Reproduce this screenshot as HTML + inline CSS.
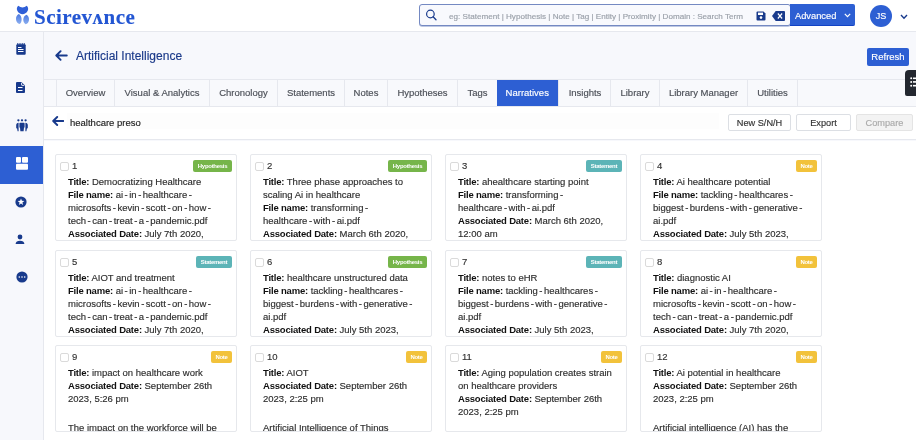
<!DOCTYPE html>
<html><head><meta charset="utf-8">
<style>
*{box-sizing:border-box;margin:0;padding:0}
html,body{width:916px;height:440px;overflow:hidden;background:#f7f8fc;font-family:"Liberation Sans",sans-serif;position:relative}
body{will-change:transform;-webkit-text-stroke:0.15px currentColor}
b,.badge{-webkit-text-stroke:0}
.abs{position:absolute}
#top{left:0;top:0;width:916px;height:32px;background:#fff;border-bottom:1px solid #e6e8ee}
#side{left:0;top:32px;width:44px;height:408px;background:#f7f8fc;border-right:1px solid #e6e8ee}
.navy{fill:#183a8c}
#search{left:419px;top:4px;width:372px;height:22px;border:1px solid #7489c2;box-shadow:0 0.7px 0 #a9b6da;border-radius:3px;background:#f8f9fd}
#search .ph{position:absolute;left:29px;top:6.5px;font-size:8.1px;color:#9aa0a9;white-space:nowrap}
#adv{left:790px;top:4px;width:65px;height:22px;background:#2d5fd3;border-bottom:1px solid #1343c4;border-radius:0 2px 2px 0;color:#fff;font-size:9.3px}
#avatar{left:870px;top:4.5px;width:22px;height:22px;border-radius:50%;background:#2d5fd3;color:#fff;font-size:9px;text-align:center;line-height:22px}
#title{left:76px;top:49px;font-size:12px;color:#1b3a8a;white-space:nowrap}
#refresh{left:867px;top:48px;width:42px;height:18px;background:#2d5fd3;border-radius:2px;color:#fff;font-size:9.5px;text-align:center;line-height:18px}
#tabs{left:44px;top:79px;width:872px;height:28px;border-top:1px solid #e6e8ee;border-bottom:1px solid #e6e8ee;background:#f8f9fc}
.tab{position:absolute;top:0;height:26px;border-left:1px solid #e6e8ee;font-size:9.5px;color:#4b4f57;text-align:center;line-height:26px;white-space:nowrap}
.tab.act{background:#2d5fd3;color:#fff;border-left:none}
#panel{left:44px;top:107px;width:872px;height:33px;background:#fff;border-bottom:1px solid #e6e8ee}
#content{left:44px;top:141px;width:872px;height:299px;background:#fff}
.btn{position:absolute;top:114px;height:17px;border:1px solid #dcdfe4;border-radius:2px;background:#fff;font-size:9.2px;color:#333;text-align:center;line-height:16px;white-space:nowrap}
.card{position:absolute;width:182px;height:87px;background:#fff;border:1px solid #e6e8ec;border-radius:2px;overflow:hidden}
.card .cb{position:absolute;left:4px;top:7px;width:9px;height:9px;border:1px solid #dadada;border-radius:2px;background:#fff}
.card .num{position:absolute;left:16px;top:5px;font-size:9.5px;color:#333}
.card .badge{position:absolute;right:4px;top:4.5px;height:12.5px;border-radius:2px;color:#fff;font-size:6px;font-weight:bold;letter-spacing:-0.3px;line-height:12.5px;text-align:center}
.hyp{background:#76b54a;width:39px}
.stm{background:#5cb4b7;width:36px}
.note{background:#f2c23b;width:21px}
.card .body{position:absolute;left:12px;top:20px;width:165px;font-size:9.5px;line-height:13px;color:#2e2e2e}
.card .body b{color:#111;letter-spacing:-0.2px}
.hy{font-style:normal;margin:0 1.5px}
</style></head><body>
<div id="top" class="abs"></div>
<div id="side" class="abs"></div>

<!-- logo -->
<svg class="abs" style="left:15px;top:5px" width="16" height="20" viewBox="0 0 16 20">
  <defs><linearGradient id="lg" x1="0" y1="0" x2="0" y2="1"><stop offset="0" stop-color="#4a78e0"/><stop offset="1" stop-color="#8db0f0"/></linearGradient></defs>
  <path d="M3.2 0.8 Q7.5 4.4 11.8 0.8 C13 2 13.4 3.6 13 5 C12.4 7 11 8.3 9 9 L7.5 9.3 L6 9 C4 8.3 2.6 7 2 5 C1.6 3.6 2 2 3.2 0.8Z" fill="#2f5fd7"/>
  <path d="M3.7 9 C1.7 10 0.9 12 1 14.2 C1.1 16.8 2.8 18.7 4.6 19.1 C6.1 18 6.7 16.2 6.6 14 C6.5 11.8 5.5 9.9 3.7 9Z" fill="url(#lg)"/>
  <path d="M11.5 9.7 C13.5 10.8 14.2 13 14 15 C13.8 17.3 12.3 19 10.6 19.3 C9 18.2 8.3 16.5 8.3 14.5 C8.4 12.2 9.6 10.5 11.5 9.7Z" fill="url(#lg)"/>
</svg>
<div class="abs" style="left:34px;top:5px;font-family:'Liberation Serif',serif;font-weight:bold;font-size:21px;letter-spacing:0.5px;color:#2356d3;white-space:nowrap">Scirev&#x28c;nce</div>

<!-- search -->
<div id="search" class="abs">
  <svg style="position:absolute;left:4px;top:3px" width="14" height="14" viewBox="0 0 14 14"><circle cx="6.4" cy="6" r="3.8" fill="none" stroke="#183a8c" stroke-width="1.2"/><path d="M9.1 8.8 L12 11.8" stroke="#183a8c" stroke-width="1.3" stroke-linecap="round"/></svg>
  <div class="ph">eg: Statement | Hypothesis | Note | Tag | Entity | Proximity | Domain : Search Term</div>
  <svg style="position:absolute;left:336px;top:5.8px" width="10" height="10" viewBox="0 0 10 10"><path d="M0.5 1.5 Q0.5 0.5 1.5 0.5 H7.5 L9.5 2.5 V8.5 Q9.5 9.5 8.5 9.5 H1.5 Q0.5 9.5 0.5 8.5Z" fill="#183a8c"/><rect x="2" y="1.6" width="5" height="2.4" fill="#fff"/><circle cx="5" cy="6.6" r="1.3" fill="#fff"/></svg>
  <svg style="position:absolute;left:352px;top:5.8px" width="13" height="10" viewBox="0 0 14 10" preserveAspectRatio="none"><path d="M4 0 H13 Q14 0 14 1 V9 Q14 10 13 10 H4 L0 5Z" fill="#183a8c"/><path d="M6.3 2.5 L10.9 7.5 M10.9 2.5 L6.3 7.5" stroke="#fff" stroke-width="1.25"/></svg>
</div>
<div id="adv" class="abs"><span style="position:absolute;left:5px;top:6.5px">Advanced</span>
  <svg style="position:absolute;left:54px;top:8.5px" width="7" height="5" viewBox="0 0 7 5"><path d="M0.8 0.8 L3.5 3.6 L6.2 0.8" fill="none" stroke="#fff" stroke-width="1.2"/></svg></div>
<div id="avatar" class="abs">JS</div>
<svg class="abs" style="left:900px;top:14px" width="8" height="6" viewBox="0 0 8 6"><path d="M1 1 L4 4.2 L7 1" fill="none" stroke="#183a8c" stroke-width="1.4"/></svg>

<!-- sidebar icons -->
<svg class="abs" style="left:16px;top:43px" width="10" height="12" viewBox="0 0 10 12"><rect x="0.3" y="1.2" width="9.4" height="10.6" rx="1" fill="#183a8c"/><path d="M1.8 0 v2 M4 0 v2 M6.2 0 v2 M8.2 0 v2" stroke="#183a8c" stroke-width="1"/><rect x="2" y="4" width="3.5" height="1" fill="#fff"/><rect x="2" y="6" width="5.5" height="1" fill="#fff"/><rect x="2" y="8" width="5.5" height="1" fill="#fff"/></svg>
<svg class="abs" style="left:16px;top:82px" width="9" height="11" viewBox="0 0 9 11"><path d="M0 1 Q0 0 1 0 H5.4 L9 3.6 V10 Q9 11 8 11 H1 Q0 11 0 10Z" fill="#183a8c"/><path d="M5.6 0.8 V2.9 Q5.6 3.4 6.1 3.4 H8.3" fill="none" stroke="#fff" stroke-width="0.9"/><rect x="2" y="5" width="4.5" height="1" fill="#fff"/><rect x="2" y="8" width="4.5" height="1" fill="#fff"/></svg>
<svg class="abs" style="left:16px;top:119px" width="12" height="13" viewBox="0 0 12 13"><g fill="#183a8c"><circle cx="2.4" cy="1.3" r="1.15"/><circle cx="6" cy="1.3" r="1.15"/><circle cx="9.6" cy="1.3" r="1.15"/><path d="M2.6 3.7 C1 3.9 0.2 4.7 0.2 6.1 V8.4 C0.2 9.1 0.6 9.3 1.1 9.4 L1.6 12.2 H2.6Z"/><path d="M4.2 3.8 H7.8 Q8.6 3.8 8.6 4.6 V8 Q8.6 8.6 8 8.8 L7.6 12.3 H4.4 L4 8.8 Q3.4 8.6 3.4 8 V4.6 Q3.4 3.8 4.2 3.8Z"/><path d="M9.4 3.7 C11 3.9 11.8 4.7 11.8 6.1 V8.4 C11.8 9.1 11.4 9.3 10.9 9.4 L10.4 12.2 H9.4Z"/></g></svg>
<div class="abs" style="left:0;top:146px;width:43px;height:38px;background:#2d5fd3"></div>
<svg class="abs" style="left:16px;top:157px" width="12" height="13" viewBox="0 0 12 13"><rect x="0" y="0" width="5" height="5.8" rx="1" fill="#fff"/><rect x="6" y="0" width="6" height="5.8" rx="1" fill="#fff"/><rect x="0" y="6.8" width="12" height="6" rx="1" fill="#fff"/></svg>
<svg class="abs" style="left:15px;top:196px" width="12" height="12" viewBox="0 0 12 12"><circle cx="6" cy="6" r="5.6" fill="#183a8c"/><path d="M6 2.4 L6.9 4.8 L9.4 4.9 L7.4 6.4 L8.1 8.9 L6 7.5 L3.9 8.9 L4.6 6.4 L2.6 4.9 L5.1 4.8Z" fill="#fff"/></svg>
<svg class="abs" style="left:15px;top:233px" width="10" height="12" viewBox="0 0 10 12"><circle cx="5" cy="4" r="2.4" fill="#183a8c"/><path d="M0.6 11 Q1 7.8 5 7.8 Q9 7.8 9.4 11Z" fill="#183a8c"/></svg>
<svg class="abs" style="left:16px;top:271px" width="12" height="12" viewBox="0 0 12 12"><circle cx="6" cy="6" r="5.6" fill="#183a8c"/><circle cx="3.3" cy="6" r="0.8" fill="#fff"/><circle cx="6" cy="6" r="0.8" fill="#fff"/><circle cx="8.7" cy="6" r="0.8" fill="#fff"/></svg>

<!-- page header -->
<svg class="abs" style="left:55px;top:49.5px" width="13" height="11" viewBox="0 0 13 11"><path d="M11.8 5.5 H1.5 M5.6 1.2 L1.3 5.5 L5.6 9.8" fill="none" stroke="#183a8c" stroke-width="1.9" stroke-linecap="round" stroke-linejoin="round"/></svg>
<div id="title" class="abs">Artificial Intelligence</div>
<div id="refresh" class="abs">Refresh</div>

<!-- tabs -->
<div id="tabs" class="abs">
  <div class="tab" style="left:12px;width:58px">Overview</div>
  <div class="tab" style="left:70px;width:95px">Visual &amp; Analytics</div>
  <div class="tab" style="left:165px;width:68px">Chronology</div>
  <div class="tab" style="left:233px;width:67px">Statements</div>
  <div class="tab" style="left:300px;width:43px">Notes</div>
  <div class="tab" style="left:343px;width:70px">Hypotheses</div>
  <div class="tab" style="left:413px;width:40px">Tags</div>
  <div class="tab act" style="left:452.5px;width:61.5px">Narratives</div>
  <div class="tab" style="left:514px;width:53px">Insights</div>
  <div class="tab" style="left:566px;width:49px">Library</div>
  <div class="tab" style="left:615px;width:88px">Library Manager</div>
  <div class="tab" style="left:703px;width:51px;border-right:1px solid #e6e8ee">Utilities</div>
</div>
<div class="abs" style="left:905px;top:70px;width:11px;height:26px;background:#23272f;border-radius:4px 0 0 2px"></div>
<svg class="abs" style="left:909px;top:76px" width="7" height="12" viewBox="0 0 7 12"><g fill="#fff"><circle cx="2.2" cy="2.3" r="1"/><circle cx="2.2" cy="5.9" r="1"/><circle cx="2.2" cy="9.7" r="1"/><rect x="4" y="1.5" width="3" height="1.6"/><rect x="4" y="5.1" width="3" height="1.6"/><rect x="4" y="8.9" width="3" height="1.6"/></g></svg>

<!-- panel -->
<div id="panel" class="abs"></div>
<div class="abs" style="left:67px;top:113px;width:652px;height:16px;background:#fdfdfd"></div>
<svg class="abs" style="left:52px;top:116px" width="12" height="10" viewBox="0 0 12 10"><path d="M11.5 5 H1.5 M5.2 1 L1.2 5 L5.2 9" fill="none" stroke="#183a8c" stroke-width="1.9" stroke-linecap="round" stroke-linejoin="round"/></svg>
<div class="abs" style="left:70px;top:117px;font-size:9.5px;color:#222;white-space:nowrap">healthcare preso</div>
<div class="btn" style="left:728px;width:63px">New S/N/H</div>
<div class="btn" style="left:796px;width:55px">Export</div>
<div class="btn" style="left:856px;width:57px;background:#f3f3f3;color:#aaa;border-color:#e4e4e4">Compare</div>

<div id="content" class="abs"></div>

<!-- cards -->
<div class="card" style="left:55px;top:154px"><div class="cb"></div><div class="num">1</div><div class="badge hyp">Hypothesis</div>
<div class="body"><b>Title:</b> Democratizing Healthcare<br><b>File name:</b> ai<i class="hy">-</i>in<i class="hy">-</i>healthcare<i class="hy">-</i><br>microsofts<i class="hy">-</i>kevin<i class="hy">-</i>scott<i class="hy">-</i>on<i class="hy">-</i>how<i class="hy">-</i><br>tech<i class="hy">-</i>can<i class="hy">-</i>treat<i class="hy">-</i>a<i class="hy">-</i>pandemic.pdf<br><b>Associated Date:</b> July 7th 2020,</div></div>
<div class="card" style="left:250px;top:154px"><div class="cb"></div><div class="num">2</div><div class="badge hyp">Hypothesis</div>
<div class="body"><b>Title:</b> Three phase approaches to<br>scaling Ai in healthcare<br><b>File name:</b> transforming<i class="hy">-</i><br>healthcare<i class="hy">-</i>with<i class="hy">-</i>ai.pdf<br><b>Associated Date:</b> March 6th 2020,</div></div>
<div class="card" style="left:445px;top:154px"><div class="cb"></div><div class="num">3</div><div class="badge stm">Statement</div>
<div class="body"><b>Title:</b> ahealthcare starting point<br><b>File name:</b> transforming<i class="hy">-</i><br>healthcare<i class="hy">-</i>with<i class="hy">-</i>ai.pdf<br><b>Associated Date:</b> March 6th 2020,<br>12:00 am</div></div>
<div class="card" style="left:640px;top:154px"><div class="cb"></div><div class="num">4</div><div class="badge note">Note</div>
<div class="body"><b>Title:</b> Ai healthcare potential<br><b>File name:</b> tackling<i class="hy">-</i>healthcares<i class="hy">-</i><br>biggest<i class="hy">-</i>burdens<i class="hy">-</i>with<i class="hy">-</i>generative<i class="hy">-</i><br>ai.pdf<br><b>Associated Date:</b> July 5th 2023,</div></div>

<div class="card" style="left:55px;top:250px"><div class="cb"></div><div class="num">5</div><div class="badge stm">Statement</div>
<div class="body"><b>Title:</b> AIOT and treatment<br><b>File name:</b> ai<i class="hy">-</i>in<i class="hy">-</i>healthcare<i class="hy">-</i><br>microsofts<i class="hy">-</i>kevin<i class="hy">-</i>scott<i class="hy">-</i>on<i class="hy">-</i>how<i class="hy">-</i><br>tech<i class="hy">-</i>can<i class="hy">-</i>treat<i class="hy">-</i>a<i class="hy">-</i>pandemic.pdf<br><b>Associated Date:</b> July 7th 2020,</div></div>
<div class="card" style="left:250px;top:250px"><div class="cb"></div><div class="num">6</div><div class="badge hyp">Hypothesis</div>
<div class="body"><b>Title:</b> healthcare unstructured data<br><b>File name:</b> tackling<i class="hy">-</i>healthcares<i class="hy">-</i><br>biggest<i class="hy">-</i>burdens<i class="hy">-</i>with<i class="hy">-</i>generative<i class="hy">-</i><br>ai.pdf<br><b>Associated Date:</b> July 5th 2023,</div></div>
<div class="card" style="left:445px;top:250px"><div class="cb"></div><div class="num">7</div><div class="badge stm">Statement</div>
<div class="body"><b>Title:</b> notes to eHR<br><b>File name:</b> tackling<i class="hy">-</i>healthcares<i class="hy">-</i><br>biggest<i class="hy">-</i>burdens<i class="hy">-</i>with<i class="hy">-</i>generative<i class="hy">-</i><br>ai.pdf<br><b>Associated Date:</b> July 5th 2023,</div></div>
<div class="card" style="left:640px;top:250px"><div class="cb"></div><div class="num">8</div><div class="badge note">Note</div>
<div class="body"><b>Title:</b> diagnostic AI<br><b>File name:</b> ai<i class="hy">-</i>in<i class="hy">-</i>healthcare<i class="hy">-</i><br>microsofts<i class="hy">-</i>kevin<i class="hy">-</i>scott<i class="hy">-</i>on<i class="hy">-</i>how<i class="hy">-</i><br>tech<i class="hy">-</i>can<i class="hy">-</i>treat<i class="hy">-</i>a<i class="hy">-</i>pandemic.pdf<br><b>Associated Date:</b> July 7th 2020,</div></div>

<div class="card" style="left:55px;top:345px"><div class="cb"></div><div class="num">9</div><div class="badge note">Note</div>
<div class="body"><b>Title:</b> impact on healthcare work<br><b>Associated Date:</b> September 26th<br>2023, 5:26 pm<br><br><span style="position:relative;top:3px">The impact on the workforce will be</span></div></div>
<div class="card" style="left:250px;top:345px"><div class="cb"></div><div class="num">10</div><div class="badge note">Note</div>
<div class="body"><b>Title:</b> AIOT<br><b>Associated Date:</b> September 26th<br>2023, 2:25 pm<br><br><span style="position:relative;top:3px">Artificial Intelligence of Things</span></div></div>
<div class="card" style="left:445px;top:345px"><div class="cb"></div><div class="num">11</div><div class="badge note">Note</div>
<div class="body"><b>Title:</b> Aging population creates strain<br>on healthcare providers<br><b>Associated Date:</b> September 26th<br>2023, 2:25 pm</div></div>
<div class="card" style="left:640px;top:345px"><div class="cb"></div><div class="num">12</div><div class="badge note">Note</div>
<div class="body"><b>Title:</b> Ai potential in healthcare<br><b>Associated Date:</b> September 26th<br>2023, 2:25 pm<br><br><span style="position:relative;top:3px">Artificial intelligence (AI) has the</span></div></div>

</body></html>
